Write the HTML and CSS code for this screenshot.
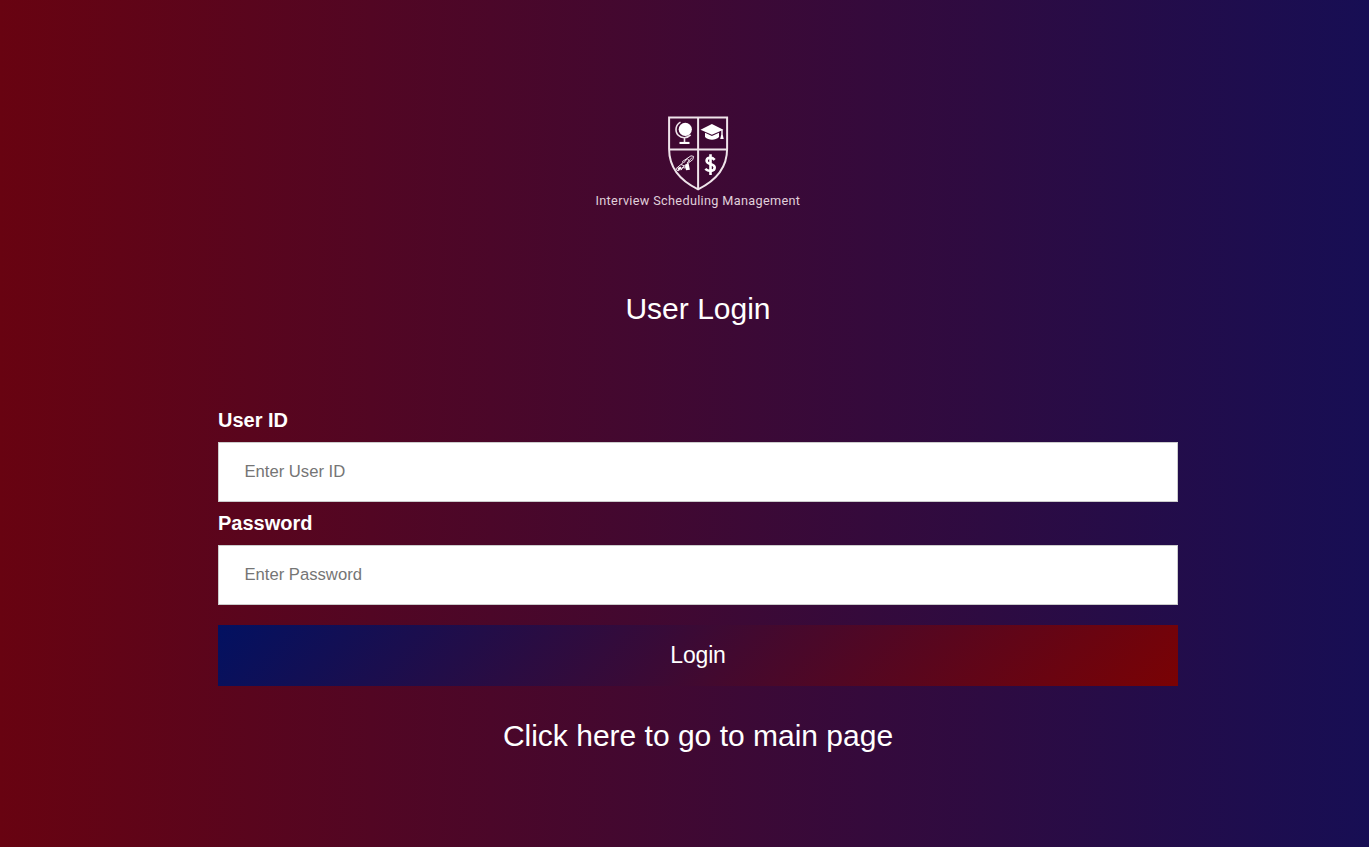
FILE: index.html
```html
<!DOCTYPE html>
<html lang="en">
<head>
<meta charset="utf-8">
<title>User Login</title>
<link rel="stylesheet" href="styles.css">
</head>
<body>
<main class="login">
  <svg class="logo" viewBox="0 0 220 104" role="img" aria-label="Interview Scheduling Management">
    <g fill="none" stroke="#efe4ea" stroke-width="2">
      <path d="M81.1 7.400H139.100V39C139.100 59 126 71.500 110.100 79.300C94 71.500 81.100 59 81.100 39ZM110.100 7V79M81 39.500H139"/>
      <path d="M92.500 12.100C87.600 14.500 86.500 21.500 90.300 25.300C93.600 28.600 99.200 28.500 102.600 24.900M96.500 27.500V32" stroke-width="1.600"/>
    </g>
    <g fill="#fff">
      <circle cx="97.300" cy="19.300" r="6.600"/>
      <path d="M91.500 31.900H101.500V34H91.500Z"/>
      <path d="M112.500 19.700L123.900 14L135.400 19.700L123.900 24.700Z"/>
      <path d="M117 22.700L123.900 25.900L131 22.700V27C127.500 30.500 120.500 30.500 117 27Z"/>
      <path d="M133.300 20H134.700V24.500L135.700 29H132.200L133.300 24.500Z"/>
      <path d="M97.500 54.500L100.500 53L101.900 59.700L98.100 60.300L97 57Z"/>
      <path d="M89.500 58L92.500 56.500L93.500 58.500L90.500 60.500Z"/>
    </g>
    <g fill="none" stroke="#efe4ec" stroke-width="1">
      <path d="M94.500 51.500L103 45.800L105.600 46.400L104.800 49.600L97 55.500L90 61L88 58.700L95 52.700Z"/>
      <path d="M95.500 53L99.500 48.500L101.500 51.500M99 53L104 47.500M93 54.500L96.500 56M93 60.200L95 57.500L97 58"/>
    </g>
    <path d="M126.700 49.800C123.500 46.200 118.400 47.500 118.600 51C118.900 54.800 126.700 53.300 126.700 57.600C126.700 61.500 120.700 62.100 117.300 58.900M122.500 44.300V65" fill="none" stroke="#fff" stroke-width="2.600"/>
    <text class="logo-text" x="7.500" y="94.600" textLength="204.500" lengthAdjust="spacing">Interview Scheduling Management</text>
  </svg>
  <h1 class="title">User Login</h1>
  <form class="form">
    <label class="label" for="user">User ID</label>
    <input class="field" id="user" type="text" placeholder="Enter User ID">
    <label class="label" for="password">Password</label>
    <input class="field" id="password" type="password" placeholder="Enter Password">
    <button class="submit" type="button">Login</button>
  </form>
  <a class="main-link" href="#">Click here to go to main page</a>
</main>
</body>
</html>
```
FILE: styles.css
```css
* { box-sizing: border-box; }
body {
  margin: 0;
  min-height: 847px;
  background: linear-gradient(to right, #680311, #170e54);
  color: #fff;
  font-family: "Liberation Sans", Arial, sans-serif;
}
.login {
  width: 960px;
  margin-left: 218px;
  padding-top: 110px;
  display: flex;
  flex-direction: column;
  align-items: center;
}
.logo { width: 220px; height: 104px; }
.logo-text {
  fill: #e0d0db;
  font: 400 12.7px Roboto, sans-serif;
}
.title {
  margin: 78px 0 0;
  font-size: 30px;
  font-weight: 400;
  line-height: 34px;
}
.form {
  width: 100%;
  padding-top: 76px;
  display: flex;
  flex-direction: column;
}
.label {
  height: 40px;
  padding-top: 7px;
  font-size: 20px;
  font-weight: 700;
  line-height: 23px;
}
.field {
  height: 60px;
  margin-bottom: 3px;
  padding: 0 25.400px;
  border: 1px solid #ccc;
  border-radius: 0;
  background: #fff;
  font-family: inherit;
  font-size: 16.67px;
}
.field::placeholder { color: #757575; }
.submit {
  height: 61px;
  margin-top: 17px;
  padding: 0;
  border: 0;
  background: linear-gradient(135deg, #021161, #7a0204);
  color: #fff;
  font-family: inherit;
  font-size: 23px;
  letter-spacing: -0.2px;
}
.main-link {
  margin-top: 33px;
  color: #fff;
  font-size: 30px;
  line-height: 34px;
  text-decoration: none;
}
```
